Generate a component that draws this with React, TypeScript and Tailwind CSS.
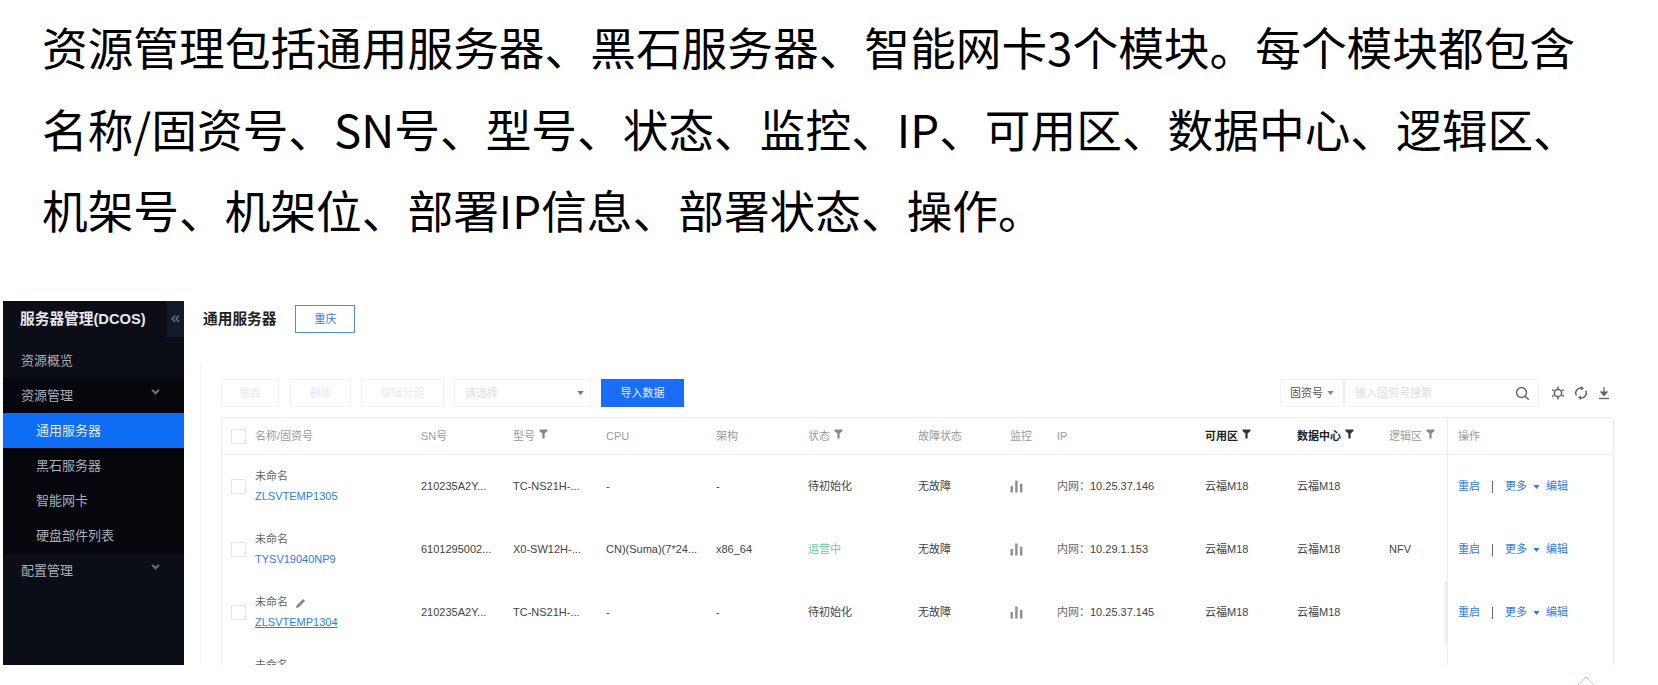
import React from "react";

const cols = "grid grid-cols-[199px_92px_93px_110px_92px_110px_92px_47px_148px_92px_92px_58px_167px]";

const rows = [
  { name: "未命名", id: "ZLSVTEMP1305", sn: "210235A2Y...", model: "TC-NS21H-...", cpu: "-", arch: "-", status: "待初始化", ip: "10.25.37.146", zone: "" },
  { name: "未命名", id: "TYSV19040NP9", sn: "6101295002...", model: "X0-SW12H-...", cpu: "CN)(Suma)(7*24...", arch: "x86_64", status: "运营中", ip: "10.29.1.153", zone: "NFV" },
  { name: "未命名", id: "ZLSVTEMP1304", sn: "210235A2Y...", model: "TC-NS21H-...", cpu: "-", arch: "-", status: "待初始化", ip: "10.25.37.145", zone: "" },
  { name: "未命名", id: "", sn: "", model: "", cpu: "", arch: "", status: "", ip: "", zone: "" },
];

const Filter = ({ dark }: { dark?: boolean }) => (
  <svg width="9" height="10" viewBox="0 0 9 10" className={`mb-1 ml-1 ${dark ? "text-[#333]" : "text-[#888]"}`}>
    <path d="M0.5 0.5h8v1.6L5.6 4.4V9.5H3.4V4.4L0.5 2.1z" fill="currentColor" />
  </svg>
);

const Bars = () => (
  <svg width="13" height="13" viewBox="0 0 13 13" className="text-[#8a8f98]">
    <rect x="0.5" y="6" width="2.4" height="6.5" fill="currentColor" />
    <rect x="5.2" y="0.5" width="2.4" height="12" fill="currentColor" />
    <rect x="10" y="4" width="2.4" height="8.5" fill="currentColor" />
  </svg>
);

const Caret = ({ className }: { className: string }) => (
  <svg width="7" height="4" viewBox="0 0 8 5" className={className}>
    <path d="M0 0h8L4 5z" fill="currentColor" />
  </svg>
);

const Chevron = () => (
  <svg width="9" height="6" viewBox="0 0 10 7" className="text-[#6d727c]">
    <path d="M1 1l4 4 4-4" fill="none" stroke="currentColor" strokeWidth="2.4" />
  </svg>
);

const Box = () => <span className="h-[15px] w-[15px] shrink-0 border border-[#e4e4e4] bg-white" />;

const MenuItem = ({ label, sub, active, chevron }: { label: string; sub?: boolean; active?: boolean; chevron?: boolean }) => (
  <div className={`flex h-[35px] items-center justify-between pr-[24px] text-[13px] ${sub ? "pl-[33px]" : "pl-[18px]"} ${active ? "bg-[#0f6cf5] text-[#dfeaff]" : "text-[#a9adb5]"}`}>
    {label}
    {chevron && <span className="mb-2"><Chevron /></span>}
  </div>
);

const Sidebar = () => (
  <aside className="relative w-[181px] shrink-0 bg-[#0b0e17]">
    <div className="flex h-[36px] items-center pl-[17px] text-[14.7px] font-bold text-[#e8e9ec]">服务器管理(DCOS)</div>
    <div className="absolute right-0 top-0 flex h-[36px] w-[17px] items-center justify-center bg-[#141a2a] pb-[2px] text-[17px] text-[#6f7c96]">«</div>
    <div className="h-[6px]" />
    <MenuItem label="资源概览" />
    <div className="bg-[#05070d]">
      <MenuItem label="资源管理" chevron />
      <MenuItem label="通用服务器" sub active />
      <MenuItem label="黑石服务器" sub />
      <MenuItem label="智能网卡" sub />
      <MenuItem label="硬盘部件列表" sub />
    </div>
    <MenuItem label="配置管理" chevron />
  </aside>
);

const Toolbar = () => (
  <div className="flex h-[28px] items-center justify-between text-[11px]">
    <div className="flex items-center">
      <span className="flex h-[28px] w-[58px] items-center justify-center border border-[#f2f2f2] text-[#e6eaf2]">重启</span>
      <span className="ml-[11px] flex h-[28px] w-[61px] items-center justify-center border border-[#f2f2f2] text-[#e6eaf2]">删除</span>
      <span className="ml-[10px] flex h-[28px] w-[83px] items-center justify-center border border-[#f2f2f2] text-[#e4eef8]">编辑分组</span>
      <span className="ml-[10px] flex h-[28px] w-[137px] items-center justify-between border border-[#f2f2f2] pl-[10px] pr-[6px] text-[#e0e0e0]">
        请选择
        <Caret className="text-[#777]" />
      </span>
      <span className="ml-[10px] flex h-[28px] w-[83px] items-center justify-center bg-[#1a6cfb] text-[#e8f0ff]">导入数据</span>
    </div>
    <div className="flex items-center pr-[3px]">
      <div className="flex h-[28px] w-[259px] items-center border border-[#f2f2f2]">
        <span className="flex h-full w-[64px] items-center justify-center gap-1 border-r-2 border-[#eeeeee] text-[#555]">
          固资号
          <Caret className="text-[#888]" />
        </span>
        <span className="flex-1 pl-[10px] text-[#dedede]">输入固资号搜索</span>
        <svg width="15" height="15" viewBox="0 0 15 15" className="mr-2 text-[#666]">
          <circle cx="6.5" cy="6.5" r="5" fill="none" stroke="currentColor" strokeWidth="1.4" />
          <path d="M10.2 10.2l3.6 3.6" stroke="currentColor" strokeWidth="1.6" />
        </svg>
      </div>
      <svg width="14" height="14" viewBox="0 0 14 14" className="ml-[12px] text-[#666]">
        <circle cx="7" cy="7" r="3.6" fill="none" stroke="currentColor" strokeWidth="1.5" />
        <path d="M7 0.5v2.4M7 11.1v2.4M1.2 3.6l2.1 1.2M10.7 9.2l2.1 1.2M1.2 10.4l2.1-1.2M10.7 4.8l2.1-1.2" stroke="currentColor" strokeWidth="1.5" />
      </svg>
      <svg width="14" height="14" viewBox="0 0 14 14" className="ml-[9px] text-[#666]">
        <path d="M2.4 9.5A5 5 0 0 1 8 2.2M11.6 4.5A5 5 0 0 1 6 11.8" fill="none" stroke="currentColor" strokeWidth="1.5" />
        <path d="M7 0l3 2.4L7 4.6zM7 14l-3-2.4L7 9.4z" fill="currentColor" />
      </svg>
      <svg width="12" height="14" viewBox="0 0 12 14" className="ml-[10px] text-[#666]">
        <path d="M6 1v7M3 6l3 3.5L9 6z" fill="currentColor" stroke="currentColor" strokeWidth="1.2" />
        <path d="M1 12.5h10" stroke="currentColor" strokeWidth="1.4" />
      </svg>
    </div>
  </div>
);

const Head = ({ label, filter, dark }: { label: string; filter?: boolean; dark?: boolean }) => (
  <div className={`flex items-center ${dark ? "font-bold text-[#222]" : "text-[#9b9b9b]"}`}>
    {label}
    {filter && <Filter dark={dark} />}
  </div>
);

const Table = () => (
  <div className="mt-[10px] w-[1392px] border-l border-t border-[#ededed] text-[11px]">
    <div className={`${cols} h-[37px] border-b border-[#eeeeee]`}>
      <div className="flex items-center gap-[9px] pl-[9px] text-[#9b9b9b]">
        <Box />
        名称/固资号
      </div>
      <Head label="SN号" />
      <Head label="型号" filter />
      <Head label="CPU" />
      <Head label="架构" />
      <Head label="状态" filter />
      <Head label="故障状态" />
      <Head label="监控" />
      <Head label="IP" />
      <Head label="可用区" filter dark />
      <Head label="数据中心" filter dark />
      <Head label="逻辑区" filter />
      <div className="flex items-center border-l border-r border-[#ececec] pl-[10px] text-[#9b9b9b]">操作</div>
    </div>
    {rows.map((row, i) => (
      <div key={i} className={`${cols} h-[63px] text-[#444]`}>
        <div className="flex items-center gap-[9px] pl-[9px]">
          <Box />
          <div className="flex flex-col gap-[5px] leading-[15px]">
            <span className="flex items-center gap-2 text-[#666]">
              {row.name}
              {i === 2 && (
                <svg width="10" height="10" viewBox="0 0 10 10" className="text-[#888]">
                  <path d="M0 10l.6-2.6L7 1l2 2-6.4 6.4z" fill="currentColor" />
                </svg>
              )}
            </span>
            <span className={`min-h-[15px] text-[#2f7bf0] ${i === 2 ? "underline" : ""}`}>{row.id}</span>
          </div>
        </div>
        {row.id ? (
          <>
            <div className="flex items-center">{row.sn}</div>
            <div className="flex items-center">{row.model}</div>
            <div className="flex items-center">{row.cpu}</div>
            <div className="flex items-center">{row.arch}</div>
            <div className={`flex items-center ${i === 1 ? "text-[#62cfa6]" : ""}`}>{row.status}</div>
            <div className="flex items-center">无故障</div>
            <div className="flex items-center"><Bars /></div>
            <div className="flex items-center"><span className="text-[#666]">内网：</span>{row.ip}</div>
            <div className="flex items-center">云福M18</div>
            <div className="flex items-center">云福M18</div>
            <div className="flex items-center">{row.zone}</div>
            <div className="relative flex items-center border-l border-r border-[#ececec] pl-[10px] text-[#2f7bf0]">
              {i === 2 && <span className="absolute -left-[5px] top-0 h-full w-[4px] bg-gradient-to-r from-white to-[#e4e6ea]" />}
              重启
              <span className="mx-[12px] h-[12px] w-px bg-[#666]" />
              更多
              <Caret className="ml-[6px] mr-[6px]" />
              编辑
            </div>
          </>
        ) : (
          <div className="col-start-13 border-l border-r border-[#ececec]" />
        )}
      </div>
    ))}
  </div>
);

export default function App() {
  return (
    <div className="relative h-[685px] w-[1658px] overflow-hidden bg-white font-['Liberation_Sans','Noto_Sans_CJK_SC',sans-serif]">
      <div className="whitespace-nowrap pl-[42px] pt-[6px] font-['Noto_Sans_CJK_SC',sans-serif] text-[45.7px] leading-[81.5px] text-black">
        <p>资源管理包括通用服务器、黑石服务器、智能网卡3个模块。每个模块都包含</p>
        <p>名称/固资号、SN号、型号、状态、监控、IP、可用区、数据中心、逻辑区、</p>
        <p>机架号、机架位、部署IP信息、部署状态、操作。</p>
      </div>

      <div className="ml-[3px] mt-[50.5px] flex h-[364px] overflow-hidden">
        <Sidebar />
        <main className="min-w-0 flex-1 overflow-hidden">
          <div className="mt-[4px] flex h-[28px] items-center pl-[19px]">
            <span className="text-[14.7px] font-bold text-[#222]">通用服务器</span>
            <span className="ml-[19px] flex h-[28px] w-[60px] items-center justify-center border border-[#4d8be8] text-[11px] text-[#2f7bf0]">重庆</span>
          </div>
          <div className="ml-[16px] mt-[29px] h-[400px] border-l border-[#f4f4f4] pl-[20px] pt-[17px]">
            <div className="w-[1392px]">
              <Toolbar />
            </div>
            <Table />
          </div>
        </main>
      </div>

      <svg width="18" height="10" viewBox="0 0 18 10" className="absolute bottom-0 left-[1577px] text-[#a9dbe8]">
        <path d="M1 10l8-8 8 8" fill="none" stroke="currentColor" strokeWidth="1" />
      </svg>
    </div>
  );
}
